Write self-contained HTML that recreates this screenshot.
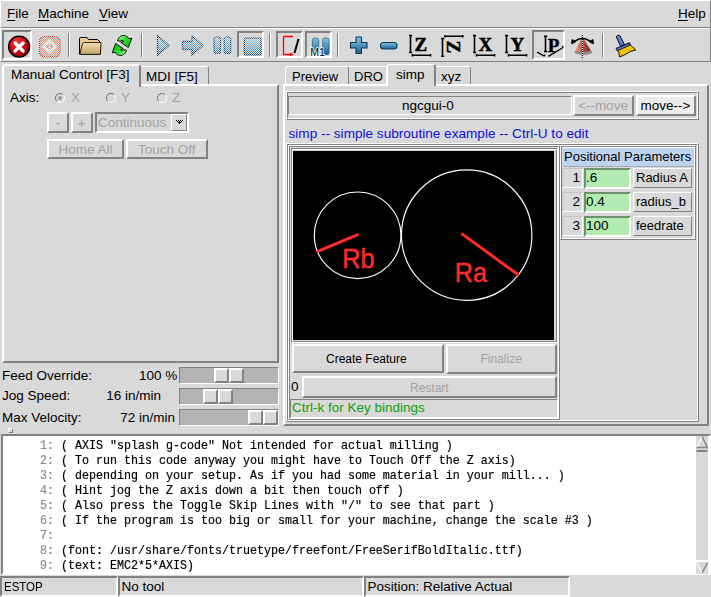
<!DOCTYPE html>
<html><head><meta charset="utf-8">
<style>
*{box-sizing:border-box;margin:0;padding:0}
html,body{width:711px;height:597px;overflow:hidden;background:#d9d9d9}
body{position:relative;font-family:"Liberation Sans",sans-serif;font-size:13.5px;color:#000}
.a{position:absolute}
.t{position:absolute;white-space:pre;line-height:1}
.raised{border:2px solid;border-color:#fff #828282 #828282 #fff}
.sunken{border:2px solid;border-color:#828282 #fff #fff #828282}
.r1{border:1px solid;border-color:#fff #828282 #828282 #fff}
.s1{border:1px solid;border-color:#828282 #fff #fff #828282}
.u{text-decoration:underline;text-underline-offset:2px}
.gray{color:#a3a3a3}
.mono{font-family:"Liberation Mono",monospace;font-size:11.67px}
</style></head><body>
<!-- MENU -->
<div class="a r1" style="left:0;top:0;width:711px;height:28px"></div>
<div class="a r1" style="left:0;top:28px;width:711px;height:34px"></div>
<div class="t" style="left:7px;top:7px"><span class="u">F</span>ile</div>
<div class="t" style="left:38px;top:7px"><span class="u">M</span>achine</div>
<div class="t" style="left:99px;top:7px"><span class="u">V</span>iew</div>
<div class="t" style="left:678px;top:7px"><span class="u">H</span>elp</div>

<!-- TOOLBAR -->

<div class="a sunken" style="left:2px;top:30px;width:30px;height:30px"></div>
<div class="a sunken" style="left:237px;top:31px;width:27px;height:27px"></div>
<div class="a sunken" style="left:276px;top:31px;width:27px;height:27px"></div>
<div class="a sunken" style="left:305px;top:31px;width:27px;height:27px"></div>
<div class="a sunken" style="left:532px;top:30px;width:33px;height:30px"></div>
<div class="a" style="left:68px;top:33px;width:1px;height:24px;background:#828282;border-right:0"></div>
<div class="a" style="left:69px;top:33px;width:1px;height:24px;background:#fff"></div>
<div class="a" style="left:141px;top:33px;width:1px;height:24px;background:#828282"></div>
<div class="a" style="left:142px;top:33px;width:1px;height:24px;background:#fff"></div>
<div class="a" style="left:269px;top:33px;width:1px;height:24px;background:#828282"></div>
<div class="a" style="left:270px;top:33px;width:1px;height:24px;background:#fff"></div>
<div class="a" style="left:337px;top:33px;width:1px;height:24px;background:#828282"></div>
<div class="a" style="left:338px;top:33px;width:1px;height:24px;background:#fff"></div>
<div class="a" style="left:602px;top:33px;width:1px;height:24px;background:#828282"></div>
<div class="a" style="left:603px;top:33px;width:1px;height:24px;background:#fff"></div>
<svg class="a" style="left:0;top:0" width="711" height="64" viewBox="0 0 711 64">
<defs>
 <pattern id="chk" width="2" height="2" patternUnits="userSpaceOnUse"><rect x="0" y="0" width="1" height="1" fill="#fff"/><rect x="1" y="1" width="1" height="1" fill="#fff"/></pattern>
 <mask id="mchk"><rect width="711" height="64" fill="url(#chk)"/></mask>
 <radialGradient id="gred" cx="0.4" cy="0.3" r="0.8"><stop offset="0" stop-color="#f04040"/><stop offset="0.6" stop-color="#c00010"/><stop offset="1" stop-color="#700008"/></radialGradient>
 <linearGradient id="gblue" x1="0" y1="0" x2="0" y2="1"><stop offset="0" stop-color="#aadcee"/><stop offset="1" stop-color="#2f7aaa"/></linearGradient>
 <linearGradient id="gblue2" x1="0" y1="0" x2="0" y2="1"><stop offset="0" stop-color="#80c4e0"/><stop offset="1" stop-color="#1a6494"/></linearGradient>
 <linearGradient id="gfold" x1="0" y1="0" x2="0" y2="1"><stop offset="0" stop-color="#f3dcb0"/><stop offset="1" stop-color="#c9a46a"/></linearGradient>
 <linearGradient id="gcone" x1="0" y1="0" x2="1" y2="0"><stop offset="0" stop-color="#f0a090"/><stop offset="0.5" stop-color="#d05040"/><stop offset="1" stop-color="#602020"/></linearGradient>
</defs>
<!-- estop -->
<circle cx="19.1" cy="46.6" r="10.5" fill="url(#gred)" stroke="#000" stroke-width="1.4"/>
<path d="M15.1 43 L23.1 51 M23.1 43 L15.1 51" stroke="#fff" stroke-width="3.3" stroke-linecap="round"/>
<!-- power disabled -->
<g mask="url(#mchk)">
 <rect x="39.5" y="36.5" width="20.5" height="20.5" rx="5" fill="#e49878" stroke="#a83828" stroke-width="1.2"/>
 <path d="M49.5 39.5 L56.5 46.5 L49.5 53.5 L42.5 46.5 Z" fill="#fff" />
 <path d="M49.5 42.5 L53.5 46.5 L49.5 50.5 L45.5 46.5 Z" fill="#d88060" />
 <path d="M49.5 42.5 V50.5" stroke="#fff" stroke-width="1.5"/>
</g>
<path d="M49.5 39.5 L56.5 46.5 L49.5 53.5 L42.5 46.5 Z" fill="none" stroke="#fff" stroke-width="1" opacity="0.5"/>
<!-- folder -->
<path d="M79.5 38.5 Q79.5 37.5 80.5 37.5 H87 L88.5 39.5 H97.5 L100.5 42.5 V54 H79.5 Z" fill="#e9cb95" stroke="#000" stroke-width="1"/>
<path d="M82.5 43.5 Q83 42.5 84.5 42.5 H101 L100.5 54.3 H79.8 Z" fill="url(#gfold)" stroke="#000" stroke-width="0.8"/>
<!-- reload -->
<defs><linearGradient id="ggr" x1="0" y1="0" x2="1" y2="1"><stop offset="0" stop-color="#b8ffb8"/><stop offset="0.4" stop-color="#30e030"/><stop offset="1" stop-color="#10b010"/></linearGradient></defs>
<g id="arr"><path d="M117.5 40.8 C118.5 36.5 122 34.8 125.5 35.8 C127 36.3 128 37.3 128.6 38.5 L131.8 38.3 L128.3 47.5 L120.7 42.3 L123.6 41.4 C122.8 40.3 121.5 40 120.3 41.2 Z" fill="url(#ggr)" stroke="#000" stroke-width="0.9" stroke-linejoin="round"/></g>
<use href="#arr" transform="rotate(180 122 45.5)"/>
<!-- play -->
<g mask="url(#mchk)">
 <path d="M157.5 35.5 L168.8 45.5 L157.5 55.5 Z" fill="url(#gblue)" stroke="#00305a" stroke-width="1.3" stroke-linejoin="round"/>
 <path d="M182.5 41.5 H192 V35.8 L202.8 45.5 L192 55.2 V49.5 H182.5 Z" fill="url(#gblue)" stroke="#00305a" stroke-width="1.3" stroke-linejoin="round"/>
 <rect x="214" y="37" width="6.5" height="16.5" rx="1.5" fill="url(#gblue)" stroke="#003a6a" stroke-width="1.2"/>
 <rect x="224.2" y="37" width="6.5" height="16.5" rx="1.5" fill="url(#gblue)" stroke="#003a6a" stroke-width="1.2"/>
 <rect x="244.3" y="38.2" width="16.7" height="16.7" rx="2" fill="url(#gblue)" stroke="#00305a" stroke-width="1.3"/>
</g>
<!-- block delete -->
<path d="M283.5 36.5 H293 M283.5 36.5 V54.5 H291" fill="none" stroke="#f00" stroke-width="1.3"/>
<path d="M290 52.5 L294 54.5 L290 56.5 Z" fill="#f00"/>
<path d="M298.5 39 L294.5 53" stroke="#000" stroke-width="2"/>
<!-- M1 -->
<rect x="312.3" y="38" width="6.5" height="16.6" rx="2.2" fill="url(#gblue2)" stroke="#1a4a6a" stroke-width="0.6"/>
<rect x="322.6" y="38" width="6.5" height="16.6" rx="2.2" fill="url(#gblue2)" stroke="#1a4a6a" stroke-width="0.6"/>
<text x="310.3" y="55.7" font-family="Liberation Sans" font-size="10.6" fill="#000" stroke="#fff" stroke-width="1.6" stroke-linejoin="round" paint-order="stroke">M1</text>
<!-- plus / minus -->
<path d="M356 37 H361.5 V42.5 H367 V48 H361.5 V53.5 H356 V48 H350.5 V42.5 H356 Z" fill="url(#gblue2)" stroke="#0f3a5a" stroke-width="1.1" stroke-linejoin="round"/>
<rect x="380.5" y="42.5" width="16.5" height="6.5" rx="3" fill="url(#gblue2)" stroke="#0f3a5a" stroke-width="1.1"/>

<!-- view icons -->
<g stroke="#000" stroke-width="1.6" fill="none">
 <path d="M410.5 35.5 V52.5 M409 35.5 H412.2 M409 52.5 H412.2"/>
 <path d="M412.5 55.3 H430.5 M412.5 54 V56.6 M430.5 54 V56.6"/>
 <path d="M442.5 38.5 V56.3 M441 38.5 H444.2 M441 56.3 H444.2"/>
 <path d="M445 36.3 H462.8 M445 35 V37.6 M462.8 35 V37.6"/>
 <path d="M474.5 35.5 V52.5 M473 35.5 H476.2 M473 52.5 H476.2"/>
 <path d="M476.5 55.3 H494.5 M476.5 54 V56.6 M494.5 54 V56.6"/>
 <path d="M506.5 35.5 V52.5 M505 35.5 H508.2 M505 52.5 H508.2"/>
 <path d="M508.5 55.3 H526.5 M508.5 54 V56.6 M526.5 54 V56.6"/>
 <path d="M545.5 36.3 V51.5 M544 36.3 H547.2 M544 51.5 H547.2"/>
 <path d="M537.2 52.1 L544.6 56.3 M544.6 56.3 V54.6 M548.4 56.4 L562.7 47.7 V46" stroke-width="1.3"/>
</g>
<text x="414.5" y="51" font-family="Liberation Serif" font-weight="bold" font-size="19" fill="#000" stroke="#000" stroke-width="0.5">Z</text>
<text x="0" y="0" font-family="Liberation Serif" font-weight="bold" font-size="19" fill="#000" stroke="#000" stroke-width="0.5" transform="translate(447,40.5) rotate(90)">Z</text>
<text x="478.5" y="51" font-family="Liberation Serif" font-weight="bold" font-size="19" fill="#000" stroke="#000" stroke-width="0.5">X</text>
<text x="510.5" y="51" font-family="Liberation Serif" font-weight="bold" font-size="19" fill="#000" stroke="#000" stroke-width="0.5">Y</text>
<text x="547.8" y="51.5" font-family="Liberation Serif" font-weight="bold" font-size="19" fill="#000" stroke="#000" stroke-width="0.4">P</text>
<!-- rotate cone -->
<ellipse cx="583.5" cy="52" rx="9" ry="3" fill="#000" opacity="0.35"/>
<path d="M582.4 36.8 L575.2 50.2 Q582.5 54.5 590.6 50.2 Z" fill="url(#gcone)"/>
<path d="M582.4 34 V58" stroke="#000" stroke-width="1.2"/>
<path d="M582.4 34 V58" stroke="#fff" stroke-width="1.2" stroke-dasharray="1 1"/>
<path d="M573.5 42.5 Q582.4 34.5 591.5 42.5" fill="none" stroke="#000" stroke-width="1.4"/>
<path d="M571.5 44 L572 39.5 L576 41.5 Z M593.5 44 L593 39.5 L589 41.5 Z" fill="#000" stroke="#000" stroke-width="0.8"/>
<!-- brush -->
<path d="M618.6 48 L628.6 43.2 L635.8 50 Q630 51 627 53.5 Q623 56 619.5 56.8 Q619.5 52 616.8 49.5 Z" fill="#f2c010" stroke="#000" stroke-width="0.9" stroke-linejoin="round"/>
<path d="M616 48.3 L629.5 42.8 L630.3 45 L617.3 50.8 Z" fill="#4a6ed0" stroke="#000" stroke-width="0.8"/>
<path d="M616.2 36.8 Q617.5 34.2 619.8 35.6 L624.5 44.5 L620.6 46.2 Z" fill="#5a7ed8" stroke="#000" stroke-width="0.9" stroke-linejoin="round"/>
</svg>


<!-- LEFT PANEL -->

<!-- tabs -->
<div class="a" style="left:141px;top:66px;width:68px;height:20px;border-top:1px solid #fff;border-right:1px solid #828282;border-top-right-radius:3px"></div>
<div class="a" style="left:2px;top:84px;width:277px;height:279px;border:2px solid;border-color:#fff #828282 #828282 #fff"></div>
<div class="a" style="left:2px;top:64px;width:139px;height:23px;border-top:2px solid #fff;border-left:2px solid #fff;border-right:2px solid #828282;border-top-left-radius:4px;border-top-right-radius:3px;background:#d9d9d9"></div>
<div class="t" style="left:11px;top:67.6px">Manual Control [F3]</div>
<div class="t" style="left:146px;top:69.6px">MDI [F5]</div>
<div class="t" style="left:10px;top:91.4px">Axis:</div>
<!-- radios -->
<div class="a" style="left:55px;top:93px;width:10px;height:10px;border-radius:50%;border:1px solid;border-color:#787878 #fff #fff #787878;background:#d9d9d9"></div>
<div class="a" style="left:58px;top:96px;width:4px;height:4px;border-radius:50%;background:#999"></div>
<div class="t gray" style="left:71px;top:91.4px">X</div>
<div class="a" style="left:106px;top:93px;width:10px;height:10px;border-radius:50%;border:1px solid;border-color:#787878 #fff #fff #787878"></div>
<div class="t gray" style="left:121px;top:91.4px">Y</div>
<div class="a" style="left:157px;top:93px;width:10px;height:10px;border-radius:50%;border:1px solid;border-color:#787878 #fff #fff #787878"></div>
<div class="t gray" style="left:172px;top:91.4px">Z</div>
<!-- jog buttons -->
<div class="a raised" style="left:47px;top:112px;width:22px;height:21px"></div>
<div class="t gray" style="left:56px;top:116px">-</div>
<div class="a raised" style="left:71px;top:112px;width:22px;height:21px"></div>
<div class="t gray" style="left:77.5px;top:115.5px;font-size:14.5px">+</div>
<div class="a sunken" style="left:95px;top:112px;width:94px;height:21px"></div>
<div class="t gray" style="left:98px;top:116.2px">Continuous</div>
<div class="a r1" style="left:171px;top:114px;width:16px;height:17px"></div>
<svg class="a" style="left:171px;top:114px" width="16" height="17"><rect x="5" y="6" width="1" height="1" fill="#000"/><rect x="6" y="7" width="1" height="1" fill="#000"/><rect x="7" y="8" width="1" height="1" fill="#000"/><rect x="8" y="9" width="1" height="1" fill="#000"/><rect x="9" y="8" width="1" height="1" fill="#000"/><rect x="10" y="7" width="1" height="1" fill="#000"/><rect x="11" y="6" width="1" height="1" fill="#000"/><rect x="7" y="6" width="1" height="1" fill="#000"/><rect x="9" y="6" width="1" height="1" fill="#000"/><rect x="8" y="7" width="1" height="1" fill="#000"/><rect x="8" y="8" width="1" height="1" fill="#000"/></svg>
<div class="a raised" style="left:47px;top:139px;width:77px;height:20px"></div>
<div class="t gray" style="left:58.5px;top:142.5px">Home All</div>
<div class="a raised" style="left:126px;top:139px;width:82px;height:20px"></div>
<div class="t gray" style="left:138px;top:142.5px">Touch Off</div>
<!-- overrides -->
<div class="t" style="left:2px;top:368.6px">Feed Override:</div>
<div class="t" style="left:139px;top:368.6px">100 %</div>
<div class="t" style="left:2px;top:389.4px">Jog Speed:</div>
<div class="t" style="left:60px;width:101px;text-align:right;top:389.4px">16 in/min</div>
<div class="t" style="left:2px;top:410.5px">Max Velocity:</div>
<div class="t" style="left:74px;width:101px;text-align:right;top:410.5px">72 in/min</div>
<div class="a s1" style="left:179px;top:367px;width:100px;height:17px;background:#b3b3b3"></div>
<div class="a raised" style="left:214px;top:368px;width:15px;height:15px;background:#d9d9d9"></div>
<div class="a raised" style="left:229px;top:368px;width:15px;height:15px;background:#d9d9d9"></div>
<div class="a s1" style="left:179px;top:388px;width:100px;height:17px;background:#b3b3b3"></div>
<div class="a raised" style="left:203px;top:389px;width:15px;height:15px;background:#d9d9d9"></div>
<div class="a raised" style="left:218px;top:389px;width:15px;height:15px;background:#d9d9d9"></div>
<div class="a s1" style="left:179px;top:409px;width:100px;height:17px;background:#b3b3b3"></div>
<div class="a raised" style="left:248px;top:410px;width:15px;height:15px;background:#d9d9d9"></div>
<div class="a raised" style="left:263px;top:410px;width:15px;height:15px;background:#d9d9d9"></div>
<div class="a" style="left:8px;top:428px;width:5px;height:5px;border:1px solid;border-color:#fff #828282 #828282 #fff"></div>


<!-- RIGHT PANEL -->
<div class="a" style="left:285px;top:66px;width:64px;height:20px;border-top:1px solid #fff;border-left:1px solid #fff;border-right:1px solid #828282;border-top-left-radius:3px;border-top-right-radius:3px"></div>
<div class="a" style="left:349px;top:66px;width:38px;height:20px;border-top:1px solid #fff;border-right:1px solid #828282;border-top-right-radius:3px"></div>
<div class="a" style="left:436px;top:66px;width:35px;height:20px;border-top:1px solid #fff;border-right:1px solid #828282;border-top-right-radius:3px"></div>
<div class="a" style="left:283px;top:84px;width:426px;height:342px;border:2px solid;border-color:#fff #828282 #828282 #fff;"></div>
<div class="a" style="left:386px;top:64px;width:50px;height:22px;border-top:1px solid #fff;border-left:2px solid #fff;border-right:2px solid #828282;border-top-left-radius:4px;border-top-right-radius:3px;background:#d9d9d9"></div>
<div class="a" style="left:388px;top:84px;width:46px;height:2px;background:#d9d9d9"></div>
<div class="t " style="left:292px;top:70px;font-size:13px">Preview</div>
<div class="t " style="left:354px;top:70px;font-size:13px">DRO</div>
<div class="t " style="left:396px;top:68px;">simp</div>
<div class="t " style="left:441px;top:70px;">xyz</div>
<div class="a" style="left:286px;top:91px;width:413px;height:29px;border:1px solid;border-color:#fff #828282 #828282 #fff;"></div>
<div class="a" style="left:287px;top:92px;width:411px;height:27px;border:1px solid;border-color:#828282 #fff #fff #828282;"></div>
<div class="a" style="left:288px;top:96px;width:284px;height:19px;border:1px solid;border-color:#828282 #fff #fff #828282;"></div>
<div class="t " style="left:402px;top:99px;">ngcgui-0</div>
<div class="a" style="left:573px;top:95px;width:61px;height:21px;border:2px solid;border-color:#fff #828282 #828282 #fff;"></div>
<div class="t gray" style="left:578px;top:99.2px;">&lt;--move</div>
<div class="a" style="left:636px;top:95px;width:60px;height:21px;border:2px solid;border-color:#fff #828282 #828282 #fff;background:#ececec;"></div>
<div class="t " style="left:640.5px;top:99.2px;">move--&gt;</div>
<div class="t " style="left:288.5px;top:126.7px;color:#1010d0;font-size:13.6px">simp -- simple subroutine example -- Ctrl-U to edit</div>
<div class="a" style="left:286px;top:143px;width:413px;height:279px;border:1px solid;border-color:#fff #828282 #828282 #fff;"></div>
<div class="a" style="left:287px;top:144px;width:411px;height:277px;border:1px solid;border-color:#828282 #fff #fff #828282;"></div>
<div class="a" style="left:288px;top:145px;width:272px;height:275px;border:1px solid;border-color:#fff #828282 #828282 #fff;"></div>
<div class="a" style="left:289px;top:146px;width:270px;height:273px;border:1px solid;border-color:#828282 #fff #fff #828282;"></div>
<div class="a" style="left:291px;top:148px;width:267px;height:195px;border:1px solid;border-color:#828282 #fff #fff #828282;"></div>
<div class="a" style="left:292px;top:149px;width:265px;height:193px;border:1px solid;border-color:#fff #828282 #828282 #fff;"></div>
<div class="a" style="left:293px;top:151px;width:261px;height:189px;background:#000"></div>
<svg class="a" style="left:293px;top:151px" width="261" height="189" viewBox="293 151 261 189">
<circle cx="357.6" cy="235.3" r="43.3" fill="none" stroke="#fff" stroke-width="1.15"/>
<circle cx="466.7" cy="235.1" r="65.2" fill="none" stroke="#fff" stroke-width="1.15"/>
<path d="M357.3 234.9 L317.7 251.4" stroke="#ff2a2a" stroke-width="3" stroke-linecap="round"/>
<path d="M462.3 234.1 L517.6 274.3" stroke="#ff2a2a" stroke-width="3" stroke-linecap="round"/>
<text x="0" y="0" font-family="Liberation Sans" font-size="27.6" fill="#ff2a2a" stroke="#ff2a2a" stroke-width="0.5" transform="translate(342.2,267.5) scale(0.915,1)">Rb</text>
<text x="0" y="0" font-family="Liberation Sans" font-size="27.6" fill="#ff2a2a" stroke="#ff2a2a" stroke-width="0.5" transform="translate(454.8,282) scale(0.915,1)">Ra</text>
</svg>
<div class="a" style="left:292px;top:344px;width:152px;height:29px;border:2px solid;border-color:#fff #828282 #828282 #fff;"></div>
<div class="t " style="left:326px;top:352.8px;font-size:12px">Create Feature</div>
<div class="a" style="left:446px;top:344px;width:111px;height:30px;border:2px solid;border-color:#fff #828282 #828282 #fff;"></div>
<div class="t gray" style="left:480.5px;top:352.8px;font-size:12px">Finalize</div>
<div class="t " style="left:291px;top:379.6px;">0</div>
<div class="a" style="left:302px;top:376px;width:255px;height:22px;border:2px solid;border-color:#fff #828282 #828282 #fff;"></div>
<div class="t gray" style="left:410px;top:381.5px;font-size:12px">Restart</div>
<div class="a" style="left:290px;top:399px;width:268px;height:19px;border:1px solid;border-color:#828282 #fff #fff #828282;"></div>
<div class="t " style="left:292px;top:401.4px;color:#10a010">Ctrl-k for Key bindings</div>
<div class="a" style="left:560px;top:145px;width:136px;height:95px;border:1px solid;border-color:#fff #828282 #828282 #fff;"></div>
<div class="a" style="left:561px;top:146px;width:134px;height:93px;border:1px solid;border-color:#828282 #fff #fff #828282;"></div>
<div class="a" style="left:562px;top:147px;width:132px;height:1px;border:0px solid;border-color:#fff #fff #fff #fff;background:#fff;"></div>
<div class="a" style="left:563px;top:148px;width:131px;height:18px;background:#bdd3ee"></div>
<div class="a" style="left:563px;top:166px;width:131px;height:1px;background:#a0a8b0"></div>
<div class="t " style="left:564px;top:150px;font-size:13px">Positional Parameters</div>
<div class="a" style="left:562px;top:168px;width:21px;height:20px;border:1px solid;border-color:#c0c0c0 #fff #fff #c0c0c0;"></div>
<div class="t " style="left:572.5px;top:171px;">1</div>
<div class="a" style="left:584px;top:168px;width:47px;height:21px;border:2px solid;border-color:#6e906e #fff #fff #6e906e;background:#b3ecb3;"></div>
<div class="t " style="left:586px;top:170.6px;">.6</div>
<div class="a" style="left:633px;top:168px;width:59px;height:20px;border:1px solid;border-color:#fff #828282 #828282 #fff;"></div>
<div class="t " style="left:636px;top:170.6px;font-size:13px">Radius A</div>
<div class="a" style="left:562px;top:192px;width:21px;height:20px;border:1px solid;border-color:#c0c0c0 #fff #fff #c0c0c0;"></div>
<div class="t " style="left:572.5px;top:195px;">2</div>
<div class="a" style="left:584px;top:192px;width:47px;height:21px;border:2px solid;border-color:#6e906e #fff #fff #6e906e;background:#b3ecb3;"></div>
<div class="t " style="left:586px;top:194.6px;">0.4</div>
<div class="a" style="left:633px;top:192px;width:59px;height:20px;border:1px solid;border-color:#fff #828282 #828282 #fff;"></div>
<div class="t " style="left:636px;top:194.6px;font-size:13px">radius_b</div>
<div class="a" style="left:562px;top:216px;width:21px;height:20px;border:1px solid;border-color:#c0c0c0 #fff #fff #c0c0c0;"></div>
<div class="t " style="left:572.5px;top:219px;">3</div>
<div class="a" style="left:584px;top:216px;width:47px;height:21px;border:2px solid;border-color:#6e906e #fff #fff #6e906e;background:#b3ecb3;"></div>
<div class="t " style="left:586px;top:218.6px;">100</div>
<div class="a" style="left:633px;top:216px;width:59px;height:20px;border:1px solid;border-color:#fff #828282 #828282 #fff;"></div>
<div class="t " style="left:636px;top:218.6px;font-size:13px">feedrate</div>

<!-- TEXT AREA -->
<div class="a" style="left:1px;top:434px;width:710px;height:141px;border:2px solid;border-color:#828282 #fff #fff #828282;background:#fff"></div>
<div class="a mono" style="left:4.8px;top:438.6px;line-height:15px;white-space:pre;font-size:12.6px;transform:scaleX(0.9259);transform-origin:0 0;-webkit-text-stroke:0.2px"><span style="color:#8c8c8c">     1: </span>( AXIS "splash g-code" Not intended for actual milling )
<span style="color:#8c8c8c">     2: </span>( To run this code anyway you might have to Touch Off the Z axis)
<span style="color:#8c8c8c">     3: </span>( depending on your setup. As if you had some material in your mill... )
<span style="color:#8c8c8c">     4: </span>( Hint jog the Z axis down a bit then touch off )
<span style="color:#8c8c8c">     5: </span>( Also press the Toggle Skip Lines with "/" to see that part )
<span style="color:#8c8c8c">     6: </span>( If the program is too big or small for your machine, change the scale #3 )
<span style="color:#8c8c8c">     7: </span>
<span style="color:#8c8c8c">     8: </span>(font: /usr/share/fonts/truetype/freefont/FreeSerifBoldItalic.ttf)
<span style="color:#8c8c8c">     9: </span>(text: EMC2*5*AXIS)
</div>
<div class="a" style="left:696px;top:436px;width:12px;height:138px;background:#d9d9d9"></div>
<svg class="a" style="left:696px;top:436px" width="12" height="138">
<path d="M6 0.5 L11.5 11.5 H0.5 Z" fill="#d9d9d9"/>
<path d="M6 0.5 L0.5 11.5" stroke="#fff" stroke-width="1.2"/>
<path d="M6 0.5 L11.5 11.5 H0.5" fill="none" stroke="#828282" stroke-width="1.6"/>
<rect x="0" y="14" width="12" height="110" fill="#d9d9d9"/>
<path d="M0.5 15 H11.5" fill="none" stroke="#828282" stroke-width="2"/>
<path d="M0 125 H12" stroke="#fff" stroke-width="2"/>
<path d="M0.5 126.5 L6 137 L11.5 126.5" fill="none" stroke="#fff" stroke-width="1.2"/>
<path d="M11.5 126.5 L6 137" stroke="#828282" stroke-width="1.5"/>
</svg>
<div class="a" style="left:0px;top:576px;width:118px;height:21px;border:2px solid;border-color:#828282 #fff #fff #828282"></div>
<div class="a" style="left:118px;top:576px;width:246px;height:21px;border:2px solid;border-color:#828282 #fff #fff #828282"></div>
<div class="a" style="left:364px;top:576px;width:206px;height:21px;border:2px solid;border-color:#828282 #fff #fff #828282"></div>
<div class="t" style="left:3.5px;top:580px;transform:scaleX(0.85);transform-origin:0 0">ESTOP</div>
<div class="t" style="left:121.5px;top:580px">No tool</div>
<div class="t" style="left:367.5px;top:580px">Position: Relative Actual</div>


<!-- STATUS -->

</body></html>
